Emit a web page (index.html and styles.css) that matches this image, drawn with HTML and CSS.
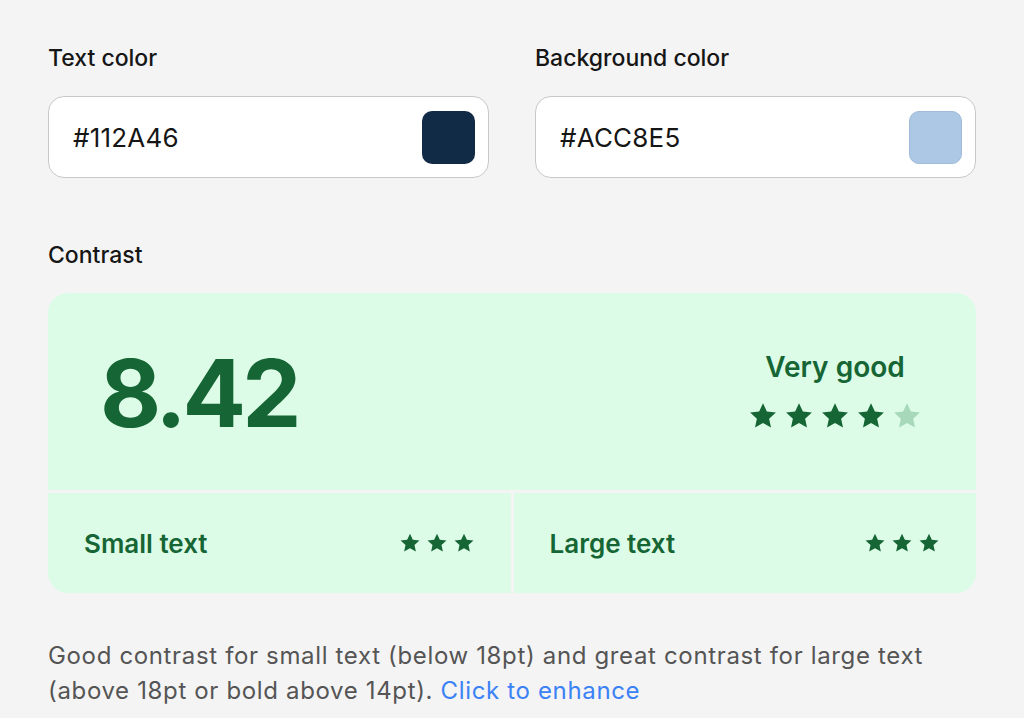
FILE: index.html
```html
<!DOCTYPE html>
<html>
<head>
<meta charset="utf-8">
<link rel="stylesheet" href="styles.css">
</head>
<body>
<div class="page">
  <div class="fields">
    <div class="field">
      <div class="label">Text color</div>
      <div class="input">
        <span class="hex">#112A46</span>
        <span class="swatch swatch-dark"></span>
      </div>
    </div>
    <div class="field">
      <div class="label">Background color</div>
      <div class="input">
        <span class="hex">#ACC8E5</span>
        <span class="swatch swatch-light"></span>
      </div>
    </div>
  </div>

  <div class="label contrast-label">Contrast</div>
  <div class="card">
    <div class="top">
      <div class="ratio">8.42</div>
      <div class="rating">
        <div class="rating-text">Very good</div>
        <div class="stars big">
          <svg viewBox="0 0 24 24"><path d="M12 1.8l3.1 6.6 7.2.8-5.4 4.9 1.5 7.1L12 17.6l-6.4 3.6 1.5-7.1L1.7 9.2l7.2-.8z"/></svg>
          <svg viewBox="0 0 24 24"><path d="M12 1.8l3.1 6.6 7.2.8-5.4 4.9 1.5 7.1L12 17.6l-6.4 3.6 1.5-7.1L1.7 9.2l7.2-.8z"/></svg>
          <svg viewBox="0 0 24 24"><path d="M12 1.8l3.1 6.6 7.2.8-5.4 4.9 1.5 7.1L12 17.6l-6.4 3.6 1.5-7.1L1.7 9.2l7.2-.8z"/></svg>
          <svg viewBox="0 0 24 24"><path d="M12 1.8l3.1 6.6 7.2.8-5.4 4.9 1.5 7.1L12 17.6l-6.4 3.6 1.5-7.1L1.7 9.2l7.2-.8z"/></svg>
          <svg class="dim" viewBox="0 0 24 24"><path d="M12 1.8l3.1 6.6 7.2.8-5.4 4.9 1.5 7.1L12 17.6l-6.4 3.6 1.5-7.1L1.7 9.2l7.2-.8z"/></svg>
        </div>
      </div>
    </div>
    <div class="cell">
      <span class="cell-text">Small text</span>
      <div class="stars small">
        <svg viewBox="0 0 24 24"><path d="M12 1.8l3.1 6.6 7.2.8-5.4 4.9 1.5 7.1L12 17.6l-6.4 3.6 1.5-7.1L1.7 9.2l7.2-.8z"/></svg>
        <svg viewBox="0 0 24 24"><path d="M12 1.8l3.1 6.6 7.2.8-5.4 4.9 1.5 7.1L12 17.6l-6.4 3.6 1.5-7.1L1.7 9.2l7.2-.8z"/></svg>
        <svg viewBox="0 0 24 24"><path d="M12 1.8l3.1 6.6 7.2.8-5.4 4.9 1.5 7.1L12 17.6l-6.4 3.6 1.5-7.1L1.7 9.2l7.2-.8z"/></svg>
      </div>
    </div>
    <div class="cell">
      <span class="cell-text">Large text</span>
      <div class="stars small">
        <svg viewBox="0 0 24 24"><path d="M12 1.8l3.1 6.6 7.2.8-5.4 4.9 1.5 7.1L12 17.6l-6.4 3.6 1.5-7.1L1.7 9.2l7.2-.8z"/></svg>
        <svg viewBox="0 0 24 24"><path d="M12 1.8l3.1 6.6 7.2.8-5.4 4.9 1.5 7.1L12 17.6l-6.4 3.6 1.5-7.1L1.7 9.2l7.2-.8z"/></svg>
        <svg viewBox="0 0 24 24"><path d="M12 1.8l3.1 6.6 7.2.8-5.4 4.9 1.5 7.1L12 17.6l-6.4 3.6 1.5-7.1L1.7 9.2l7.2-.8z"/></svg>
      </div>
    </div>
  </div>

  <p class="note">Good contrast for small text (below 18pt) and great contrast for large text (above 18pt or bold above 14pt). <a class="link" href="#">Click to enhance</a></p>
</div>
</body>
</html>
```
FILE: styles.css
```css
html, body {
  margin: 0;
  padding: 0;
  background: #f4f4f4;
  font-family: Inter, "Noto Sans", sans-serif;
}

.page {
  width: 928px;
  padding: 42px 48px 0;
}

.fields {
  display: grid;
  grid-template-columns: 1fr 1fr;
  column-gap: 46px;
}

.label {
  font-size: 23px;
  line-height: 32px;
  font-weight: 500;
  color: #161616;
  margin-bottom: 22px;
}

.input {
  box-sizing: border-box;
  height: 82px;
  display: flex;
  align-items: center;
  justify-content: space-between;
  padding: 0 13px 0 24px;
  background: #ffffff;
  border: 1.5px solid #c8c8c8;
  border-radius: 16px;
}

.hex {
  font-size: 26px;
  color: #161616;
  letter-spacing: 0.2px;
}

.swatch {
  width: 53px;
  height: 53px;
  border-radius: 10px;
  box-sizing: border-box;
}

.swatch-dark {
  background: #112a46;
}

.swatch-light {
  background: #acc8e5;
  border: 1px solid #9fbbd8;
}

.contrast-label {
  margin-top: 61px;
  margin-bottom: 22px;
}

.card {
  display: grid;
  grid-template-columns: 1fr 1fr;
  gap: 3px;
  border-radius: 20px;
  overflow: hidden;
}

.top {
  grid-column: 1 / 3;
  height: 197px;
  background: #dcfce7;
  display: flex;
  align-items: center;
  justify-content: space-between;
  padding: 0 54px 0 52px;
}

.ratio {
  font-size: 94px;
  font-weight: 700;
  color: #166534;
  letter-spacing: -4px;
  margin-top: 2px;
}

.rating {
  display: flex;
  flex-direction: column;
  align-items: center;
  margin-top: -2px;
}

.rating-text {
  font-size: 28px;
  font-weight: 600;
  color: #166534;
  margin-bottom: 17px;
}

.stars {
  display: flex;
  fill: #166534;
}

.stars.big {
  gap: 6px;
}

.stars.big svg {
  width: 30px;
  height: 30px;
}

.stars.big svg.dim {
  fill: #a7d8b9;
}

.stars.small {
  gap: 5px;
}

.stars.small svg {
  width: 22px;
  height: 22px;
}

.cell {
  height: 100px;
  background: #dcfce7;
  display: flex;
  align-items: center;
  justify-content: space-between;
  padding: 0 36px;
}

.cell-text {
  font-size: 26px;
  font-weight: 600;
  color: #166534;
}

.note {
  margin: 45px 0 0;
  font-size: 24px;
  line-height: 35px;
  letter-spacing: 0.65px;
  color: #555555;
}

.link {
  color: #3b82f6;
  text-decoration: none;
}
```
